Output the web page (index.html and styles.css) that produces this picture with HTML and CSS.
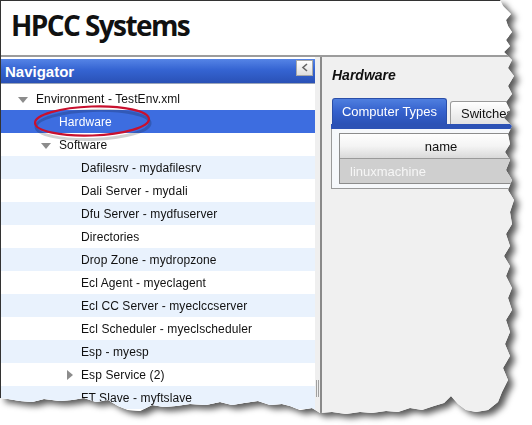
FILE: index.html
```html
<!DOCTYPE html>
<html>
<head>
<meta charset="utf-8">
<link rel="stylesheet" href="styles.css">
</head>
<body>
<div class="shadow">
  <div class="paper">
    <header class="banner"><h1>HPCC Systems</h1></header>
    <div class="main">
      <aside class="nav">
        <div class="nav-head">
          <span>Navigator</span>
          <span class="collapse"><svg width="8" height="9" viewBox="0 0 8 9"><polyline points="6,1 2,4.5 6,8" fill="none" stroke="#666" stroke-width="1.6"/></svg></span>
        </div>
        <ul class="tree">
          <li class="row l0"><span class="exp down"></span>Environment - TestEnv.xml</li>
          <li class="row l1 sel"><span class="exp"></span>Hardware</li>
          <li class="row l1"><span class="exp down"></span>Software</li>
          <li class="row l2 alt"><span class="exp"></span>Dafilesrv - mydafilesrv</li>
          <li class="row l2"><span class="exp"></span>Dali Server - mydali</li>
          <li class="row l2 alt"><span class="exp"></span>Dfu Server - mydfuserver</li>
          <li class="row l2"><span class="exp"></span>Directories</li>
          <li class="row l2 alt"><span class="exp"></span>Drop Zone - mydropzone</li>
          <li class="row l2"><span class="exp"></span>Ecl Agent - myeclagent</li>
          <li class="row l2 alt"><span class="exp"></span>Ecl CC Server - myeclccserver</li>
          <li class="row l2"><span class="exp"></span>Ecl Scheduler - myeclscheduler</li>
          <li class="row l2 alt"><span class="exp"></span>Esp - myesp</li>
          <li class="row l2"><span class="exp right"></span>Esp Service (2)</li>
          <li class="row l2 alt"><span class="exp"></span>FT Slave - myftslave</li>
        </ul>
      </aside>
      <div class="splitter"><span class="grip"></span></div>
      <section class="detail">
        <h2>Hardware</h2>
        <div class="tabs">
          <span class="tab active">Computer Types</span>
          <span class="tab">Switches</span>
        </div>
        <div class="tabbar"></div>
        <div class="pane">
          <div class="grid">
            <div class="ghead">name</div>
            <div class="grow">linuxmachine</div>
          </div>
        </div>
      </section>
    </div>
    <svg class="mark" width="124" height="40" viewBox="0 0 124 40">
      <ellipse cx="61" cy="21" rx="57" ry="14.5" fill="none" stroke="rgba(0,0,0,0.18)" stroke-width="3" transform="rotate(-2 61 21) translate(1 2)"/>
      <ellipse cx="61" cy="19" rx="57" ry="14.5" fill="none" stroke="#c8102e" stroke-width="2.2" transform="rotate(-2 61 19)"/>
    </svg>
  </div>
</div>
</body>
</html>
```
FILE: styles.css
```css
html, body {
  margin: 0;
  padding: 0;
  background: #fff;
}
.shadow {
  width: 532px;
  height: 425px;
  filter: drop-shadow(5px 4px 3px rgba(0, 0, 0, 0.65));
}
.paper {
  position: relative;
  width: 532px;
  height: 425px;
  box-sizing: border-box;
  border-top: 1px solid #333;
  border-left: 1px solid #333;
  background: #fff;
  overflow: hidden;
  display: flex;
  flex-direction: column;
  font-family: "Liberation Sans", Arial, sans-serif;
  clip-path: polygon(0 0, 500px 0, 503px 6px, 511px 14px, 506px 20px, 508px 26px, 512px 32px, 506px 40px, 510px 46px, 504px 52px, 512px 60px, 508px 68px, 514px 76px, 508px 86px, 512px 94px, 506px 102px, 510px 110px, 504px 118px, 512px 126px, 508px 134px, 510px 144px, 505px 152px, 510px 160px, 506px 170px, 512px 180px, 508px 190px, 514px 200px, 510px 212px, 512px 224px, 506px 234px, 510px 246px, 504px 256px, 510px 266px, 506px 276px, 512px 288px, 508px 298px, 512px 310px, 506px 320px, 510px 332px, 505px 344px, 510px 356px, 503px 368px, 508px 380px, 502px 392px, 498px 402px, 488px 410px, 476px 412px, 466px 410px, 458px 404px, 451px 396px, 444px 403px, 434px 406px, 422px 410px, 410px 408px, 398px 412px, 386px 411px, 372px 413px, 360px 412px, 346px 414px, 332px 412px, 320px 413px, 312px 408px, 300px 410px, 290px 406px, 282px 404px, 270px 405px, 258px 401px, 244px 403px, 232px 405px, 220px 402px, 206px 405px, 190px 404px, 176px 406px, 164px 407px, 152px 405px, 140px 411px, 128px 410px, 118px 406px, 108px 400px, 96px 402px, 84px 398px, 72px 400px, 60px 401px, 44px 399px, 32px 402px, 20px 401px, 8px 399px, 0 398px);
}
.banner {
  height: 54px;
  flex: none;
  background: #fff;
}
.banner h1 {
  margin: 0;
  padding: 6px 0 0 10px;
  font-family: "Open Sans", "Liberation Sans", sans-serif;
  font-weight: 700;
  font-size: 28px;
  line-height: 36px;
  letter-spacing: -1.6px;
  color: #111;
}
.main {
  flex: 1;
  display: flex;
  min-height: 0;
  border-top: 2px solid #9c9c9c;
}
.nav {
  width: 314px;
  flex: none;
  background: #fff;
  padding-top: 2px;
}
.nav-head {
  height: 25px;
  box-sizing: border-box;
  background: linear-gradient(#5584e6, #3564d2 45%, #2a51b6);
  border-bottom: 1px solid #9aa4b8;
  display: flex;
  align-items: center;
  justify-content: space-between;
  padding: 0 2px 0 4px;
  color: #fff;
  font-weight: bold;
  font-size: 15px;
}
.collapse {
  width: 17px;
  height: 16px;
  box-sizing: border-box;
  border: 1px solid #a8a8a8;
  background: linear-gradient(#ffffff, #dedede);
  display: flex;
  align-items: center;
  justify-content: center;
  margin-top: -7px;
}
.tree {
  list-style: none;
  margin: 0;
  padding: 3px 0 0 0;
}
.row {
  height: 23px;
  display: flex;
  align-items: center;
  font-size: 12px;
  letter-spacing: 0.1px;
  color: #111;
  white-space: nowrap;
}
.row.l0 { padding-left: 12px; }
.row.l1 { padding-left: 35px; }
.row.l2 { padding-left: 57px; }
.row.alt { background: #e9f2fd; }
.row.sel { background: #3d6de0; color: #fff; }
.exp {
  width: 23px;
  height: 23px;
  flex: none;
  position: relative;
}
.exp.down::before {
  content: "";
  position: absolute;
  left: 5px;
  top: 10px;
  border-left: 5px solid transparent;
  border-right: 5px solid transparent;
  border-top: 6px solid #8c8c8c;
}
.exp.right::before {
  content: "";
  position: absolute;
  left: 9px;
  top: 7px;
  border-top: 5px solid transparent;
  border-bottom: 5px solid transparent;
  border-left: 6px solid #8c8c8c;
}
.splitter {
  width: 5px;
  flex: none;
  background: #efefef;
  display: flex;
  align-items: flex-end;
  justify-content: center;
  padding-bottom: 28px;
  box-sizing: border-box;
}
.grip {
  width: 3px;
  height: 17px;
  border-left: 1px solid #a0a0a0;
  border-right: 1px solid #a0a0a0;
  box-sizing: border-box;
}
.detail {
  flex: 1;
  background: #f0f0f0;
  border-left: 2px solid #8a8a8a;
  display: flex;
  flex-direction: column;
  min-width: 0;
}
.detail h2 {
  margin: 0;
  padding: 9px 0 0 10px;
  font-size: 14px;
  line-height: 18px;
  font-style: italic;
  font-weight: bold;
  color: #111;
}
.tabs {
  margin-top: 14px;
  padding-left: 10px;
  display: flex;
  align-items: flex-end;
  gap: 3px;
  height: 26px;
}
.tab {
  height: 23px;
  box-sizing: border-box;
  padding: 0 10px;
  display: flex;
  align-items: center;
  font-size: 13px;
  white-space: nowrap;
  border: 1px solid #9a9a9a;
  border-bottom: none;
  border-radius: 3px 3px 0 0;
  background: linear-gradient(#ffffff, #e2e2e2);
  color: #111;
}
.tab.active {
  height: 26px;
  width: 115px;
  justify-content: center;
  padding: 0;
  background: linear-gradient(#4f7fdf, #3561cd 50%, #2b52b6);
  border-color: #2a4ea8;
  color: #fff;
}
.tabbar {
  height: 5px;
  margin-left: 9px;
  background: #2c52b5;
}
.pane {
  margin-left: 9px;
  width: 240px;
  box-sizing: border-box;
  border: 1px solid #9a9a9a;
  border-top: none;
  background: #f6f8fb;
  padding: 4px 0 4px 7px;
}
.grid {
  width: 202px;
  border: 1px solid #8c8c8c;
}
.ghead {
  height: 25px;
  box-sizing: border-box;
  border-bottom: 1px solid #9a9a9a;
  background: linear-gradient(#fefefe, #f4f4f4 50%, #d9d9d9);
  display: flex;
  align-items: center;
  justify-content: center;
  font-size: 13px;
  color: #111;
}
.grow {
  height: 24px;
  background: #cfcfcf;
  color: #f6f6f6;
  font-size: 13px;
  display: flex;
  align-items: center;
  padding-left: 10px;
}
.mark {
  position: absolute;
  left: 30px;
  top: 101px;
}
```
